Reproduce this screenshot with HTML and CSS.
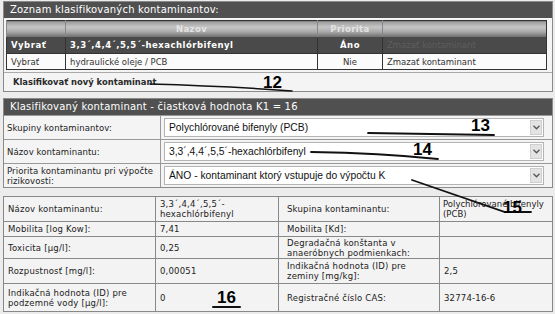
FILE: index.html
```html
<!DOCTYPE html>
<html lang="sk">
<head>
    <meta charset="UTF-8">
    <title>Klasifikácia kontaminantov</title>
    <link rel="stylesheet" href="styles.css">
</head>
<body>
    <div class="page">
        <div class="panel">
            <div class="panel-head">Zoznam klasifikovaných kontaminantov:</div>
            <table class="list">
                <tr class="list-head">
                    <th class="c-pick"></th>
                    <th class="c-name">Nazov</th>
                    <th class="c-prio">Priorita</th>
                    <th class="c-del"></th>
                </tr>
                <tr class="selected">
                    <td>Vybrať</td>
                    <td>3,3´,4,4´,5,5´-hexachlórbifenyl</td>
                    <td class="center">Áno</td>
                    <td class="muted">Zmazať kontaminant</td>
                </tr>
                <tr>
                    <td class="pick">Vybrať</td>
                    <td>hydraulické oleje / PCB</td>
                    <td class="center">Nie</td>
                    <td>Zmazať kontaminant</td>
                </tr>
            </table>
            <div class="add-row">Klasifikovať nový kontaminant</div>
        </div>

        <div class="panel second">
            <div class="panel-head">Klasifikovaný kontaminant - čiastková hodnota K1 = 16</div>
            <table class="fields">
                <tr>
                    <td class="label">Skupiny kontaminantov:</td>
                    <td><div class="select"><span>Polychlórované bifenyly (PCB)</span><span class="arrow"><svg width="7" height="5" viewBox="0 0 7 5"><path d="M0.5 0.8 L3.5 3.8 L6.5 0.8" fill="none" stroke="#555" stroke-width="1.3"/></svg></span></div></td>
                </tr>
                <tr>
                    <td class="label">Názov kontaminantu:</td>
                    <td><div class="select"><span>3,3´,4,4´,5,5´-hexachlórbifenyl</span><span class="arrow"><svg width="7" height="5" viewBox="0 0 7 5"><path d="M0.5 0.8 L3.5 3.8 L6.5 0.8" fill="none" stroke="#555" stroke-width="1.3"/></svg></span></div></td>
                </tr>
                <tr>
                    <td class="label">Priorita kontaminantu pri výpočte<br>rizikovosti:</td>
                    <td><div class="select"><span>ÁNO - kontaminant ktorý vstupuje do výpočtu K</span><span class="arrow"><svg width="7" height="5" viewBox="0 0 7 5"><path d="M0.5 0.8 L3.5 3.8 L6.5 0.8" fill="none" stroke="#555" stroke-width="1.3"/></svg></span></div></td>
                </tr>
            </table>
        </div>

        <table class="data">
            <tr class="r-a">
                <td class="k1">Názov kontaminantu:</td>
                <td class="v1">3,3´,4,4´,5,5´-<br>hexachlórbifenyl</td>
                <td class="k2">Skupina kontaminantu:</td>
                <td class="v2">Polychlórované bifenyly<br>(PCB)</td>
            </tr>
            <tr class="r-b">
                <td>Mobilita [log Kow]:</td>
                <td>7,41</td>
                <td class="k2">Mobilita [Kd]:</td>
                <td></td>
            </tr>
            <tr class="r-c">
                <td>Toxicita [µg/l]:</td>
                <td>0,25</td>
                <td class="k2">Degradačná konštanta v<br>anaeróbnych podmienkach:</td>
                <td></td>
            </tr>
            <tr class="r-d">
                <td>Rozpustnosť [mg/l]:</td>
                <td>0,00051</td>
                <td class="k2">Indikačná hodnota (ID) pre<br>zeminy [mg/kg]:</td>
                <td>2,5</td>
            </tr>
            <tr class="r-e">
                <td>Indikačná hodnota (ID) pre<br>podzemné vody [µg/l]:</td>
                <td>0</td>
                <td class="k2">Registračné číslo CAS:</td>
                <td>32774-16-6</td>
            </tr>
        </table>

        <!-- hand-drawn annotations over the screenshot -->
        <svg class="notes" width="555" height="314" viewBox="0 0 555 314">
            <g fill="none" stroke="#111" stroke-linecap="round">
                <path d="M150 84 Q 225 86 292 91" stroke-width="1.6"/>
                <path d="M368 133 L 494 135" stroke-width="1.8"/>
                <path d="M311 152 Q 380 153 438 159" stroke-width="1.8"/>
                <path d="M412 180 L 505 212 L 531 212" stroke-width="1.8"/>
                <path d="M213 307 L 240 307" stroke-width="2"/>
            </g>
            <g class="note-num">
                <text x="263" y="88">12</text>
                <text x="471" y="131">13</text>
                <text x="413" y="155">14</text>
                <text x="503" y="213">15</text>
                <text x="217" y="303">16</text>
            </g>
        </svg>
    </div>
</body>
</html>
```

FILE: styles.css
```css
body {
    margin: 0;
    background: #ececec;
    font-family: "DejaVu Sans", Verdana, sans-serif;
    font-size: 8.5px;
    color: #222;
}

.page {
    position: relative;
    width: 555px;
    height: 314px;
    padding: 1px 2px 0 3px;
    box-sizing: border-box;
    overflow: hidden;
}

.panel {
    background: #f4f4f4;
    border: 1px solid #8a8a8a;
}

.second {
    margin-top: 6px;
}

.panel-head {
    background: #505050;
    color: #fff;
    font-size: 10px;
    height: 16px;
    line-height: 16px;
    padding-left: 6px;
    letter-spacing: 0.2px;
}

/* list of classified contaminants */
.list {
    border-collapse: collapse;
    margin: 2px 0 0 2px;
    width: 541px;
    border: 1px solid #333;
}

.list td,
.list th {
    border-left: 1px solid #333;
    padding: 0 4px;
    white-space: nowrap;
}

.list-head th {
    height: 16px;
    background: linear-gradient(#9a9a9a, #c6c6c6 35%, #a8a8a8 65%, #6a6a6a);
    color: #e4e4e4;
    font-weight: bold;
    letter-spacing: 0.4px;
    border-left-color: #888;
}

.c-pick { width: 50px; }
.c-name { width: 243px; }
.c-prio { width: 56px; }

.selected td {
    height: 16px;
    background: #4a4a4a;
    color: #fff;
    font-weight: bold;
    letter-spacing: 0.5px;
}

.selected td.muted {
    color: #5e5e5e;
    font-weight: normal;
    letter-spacing: 0;
}

.list tr:last-child td {
    height: 15px;
    background: #fbfbfb;
    color: #333;
    border-top: 1px solid #333;
}

.list td.pick {
    color: #666;
}

.center {
    text-align: center;
}

.add-row {
    margin-top: 2px;
    border-top: 1px solid #aaa;
    height: 18px;
    line-height: 18px;
    padding-left: 9px;
    font-family: "DejaVu Sans Condensed", "DejaVu Sans", sans-serif;
    font-weight: bold;
    font-size: 9.3px;
    color: #2a2a2a;
}

/* selects of the classified contaminant */
.fields {
    border-collapse: collapse;
    width: 100%;
}

.fields td {
    border-top: 1px solid #999;
    height: 23px;
    padding: 0 8px 0 3px;
    vertical-align: middle;
}

.fields td.label {
    width: 152px;
    padding-right: 1px;
    border-right: 1px solid #999;
    line-height: 10px;
    letter-spacing: 0.1px;
    white-space: nowrap;
}

.select {
    display: flex;
    align-items: center;
    height: 17px;
    background: #fff;
    border: 1px solid #b4b4b4;
    font-family: "Liberation Sans", Arial, sans-serif;
    font-size: 10.3px;
    color: #111;
}

.select span:first-child {
    flex: 1;
    padding-left: 4px;
}

.arrow {
    width: 12px;
    height: 15px;
    margin-right: 1px;
    background: #e4e4e4;
    border: 1px solid #cfcfcf;
    box-sizing: border-box;
    display: flex;
    align-items: center;
    justify-content: center;
}

/* values of the contaminant */
.data {
    margin-top: 8px;
    width: 550px;
    border-collapse: collapse;
    background: #f3f3f3;
    border: 1px solid #777;
}

.data td {
    border: 1px solid #888;
    padding: 0 4px;
    line-height: 10px;
    vertical-align: middle;
    letter-spacing: 0.2px;
}

.data td.k1 { width: 143px; }
.data td.v1 { width: 114px; }
.data td.k2 { width: 148px; padding-left: 8px; }
.data td.v2 { padding-left: 3px; letter-spacing: 0; white-space: nowrap; }

.r-a td { height: 24px; }
.r-b td { height: 14px; }
.r-c td { height: 21px; }
.r-d td { height: 24px; }
.r-e td { height: 27px; }

.notes {
    position: absolute;
    top: 0;
    left: 0;
    pointer-events: none;
}

.note-num {
    font-family: "Liberation Sans", Arial, sans-serif;
    font-weight: bold;
    font-size: 17px;
    fill: #000;
}
```
